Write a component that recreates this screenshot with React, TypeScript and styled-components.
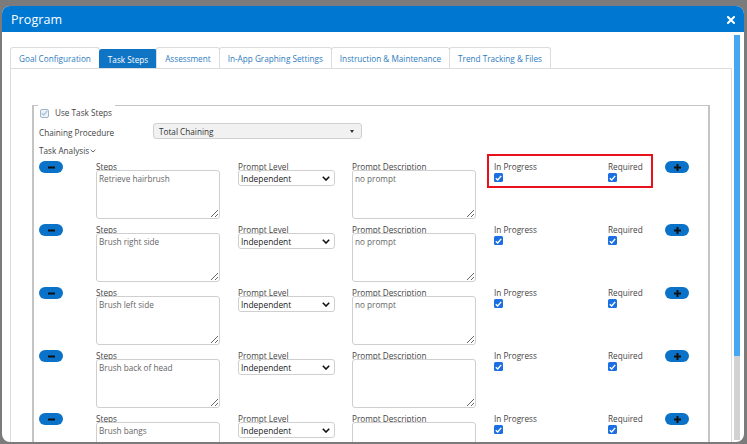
import React from 'react'
import styled, { createGlobalStyle } from 'styled-components'

const GlobalStyle = createGlobalStyle`
	html, body {
		margin: 0;
		padding: 0;
		background: #7b7b7b;
		font-family: "Open Sans", "Noto Sans", sans-serif;
		overflow: hidden;
	}
	* { box-sizing: border-box; }
`

const Page = styled.div`
	width: 747px;
	height: 444px;
	padding: 6px 3px 2px 2px;
`

const Modal = styled.div`
	width: 742px;
	height: 436px;
	background: #fff;
	border-radius: 8px;
	overflow: hidden;
	display: flex;
	flex-direction: column;
	position: relative;
`

const Header = styled.div`
	height: 26px;
	background: #0078d2;
	color: #fff;
	display: flex;
	align-items: center;
	justify-content: space-between;
	padding: 1px 9px 0 9px;
	flex-shrink: 0;
`

const Title = styled.div`
	font-size: 12.5px;
	letter-spacing: 0.1px;
`

const Close = styled.div`
	width: 8px;
	height: 8px;
	display: flex;
	svg { display: block; }
`

const Body = styled.div`
	flex: 1;
	display: flex;
	min-height: 0;
`

const Content = styled.div`
	flex: 1;
	padding: 15px 0 0 8px;
	overflow: hidden;
`

const Scrollbar = styled.div`
	width: 6px;
	margin: 3px 4px 2px 2px;
	background: #d2d2d2;
	display: flex;
	flex-direction: column;
`

const Thumb = styled.div`
	height: 321px;
	background: #45a7f2;
`

const Tabs = styled.div`
	display: flex;
	align-items: flex-end;
	height: 21px;
`

const Tab = styled.div<{ $active?: boolean }>`
	height: ${p => (p.$active ? '19px' : '21px')};
	padding: 0 8px;
	display: flex;
	align-items: center;
	font-size: 8.2px;
	color: ${p => (p.$active ? '#fff' : '#2d7cc0')};
	background: ${p => (p.$active ? '#0f74c4' : '#fff')};
	border: 1px solid ${p => (p.$active ? '#0f74c4' : '#dcdcdc')};
	border-bottom: none;
	border-radius: 3px 3px 0 0;
	margin-right: -1px;
	white-space: nowrap;
`

const Panel = styled.div`
	border: 1px solid #dcdcdc;
	border-bottom: none;
	padding: 22px 21px 0 21px;
	height: 500px;
`

const Fieldset = styled.fieldset`
	margin: 0;
	border: 1px solid #c4c4c4;
	border-width: 1px 2px 0 2px;
	padding: 4px 0 0 5px;
	min-width: 0;
`

const Legend = styled.legend`
	padding: 16px 3px 0 2px;
	margin-left: -1px;
	font-size: 8.2px;
	line-height: 12px;
	color: #444;
	display: flex;
	align-items: center;
	gap: 6px;
`

const GhostBox = styled.span`
	width: 9px;
	height: 9px;
	border: 1px solid #9fb4c8;
	border-radius: 2px;
	background: #eef3f8;
	display: inline-flex;
	align-items: center;
	justify-content: center;
`

const ProcRow = styled.div`
	display: flex;
	align-items: center;
	height: 16px;
`

const ProcLabel = styled.div`
	width: 114px;
	font-size: 8.2px;
	color: #444;
	padding-top: 3px;
`

const ProcSelect = styled.div`
	width: 209px;
	height: 16px;
	background: #f1f1f1;
	border: 1px solid #d0d0d0;
	border-radius: 3px;
	display: flex;
	align-items: center;
	justify-content: space-between;
	padding: 0 7px 0 5px;
	font-size: 8.2px;
	color: #333;
`

const Caret = styled.span`
	width: 0;
	height: 0;
	border-left: 2px solid transparent;
	border-right: 2px solid transparent;
	border-top: 3px solid #333;
	margin-top: 1px;
`

const SectionLabel = styled.div`
	font-size: 8.2px;
	color: #444;
	height: 10px;
	line-height: 10px;
	margin-top: 7px;
	display: flex;
	align-items: center;
`

const Rows = styled.div`
	display: flex;
	flex-direction: column;
	gap: 5px;
	margin-top: 5px;
`

const Row = styled.div`
	display: grid;
	grid-template-columns: 57px 142px 114px 142px 114px 57px 24px;
	position: relative;
`

const Pill = styled.div`
	width: 24px;
	height: 12px;
	border-radius: 6px;
	background: #0a72c8;
	display: flex;
	align-items: center;
	justify-content: center;
	svg { display: block; }
`

const Field = styled.div`
	display: flex;
	flex-direction: column;
	align-items: flex-start;
`

const Label = styled.div`
	font-size: 8.2px;
	color: #444;
	line-height: 9px;
	height: 9px;
	margin-top: 1px;
	white-space: nowrap;
`

const Area = styled.textarea`
	width: 124px;
	height: 49px;
	margin: -1px 0 0 0;
	border: 1px solid #cfcfcf;
	border-radius: 3px;
	padding: 2px 2px;
	font-family: "Open Sans", "Noto Sans", sans-serif;
	font-size: 8.2px;
	color: #666;
	background: #fff;
	outline: none;
	resize: vertical;
`

const Select = styled.div`
	width: 97px;
	height: 16px;
	margin-top: -1px;
	border: 1px solid #cfcfcf;
	border-radius: 3px;
	display: flex;
	align-items: center;
	justify-content: space-between;
	padding: 1px 4px 0 2px;
	font-size: 8.4px;
	color: #222;
`

const Check = styled.span`
	width: 9px;
	height: 9px;
	border-radius: 1.5px;
	background: #1b6fe0;
	display: inline-flex;
	align-items: center;
	justify-content: center;
	margin-top: 2px;
`

const Highlight = styled.div`
	position: absolute;
	left: 448px;
	top: -7px;
	width: 166px;
	height: 34px;
	border: 2px solid #e8101a;
	pointer-events: none;
`

const MinusIcon = () => (
	<svg width="7" height="3" viewBox="0 0 7 3"><rect x="0" y="0.5" width="7" height="2" fill="#111" /></svg>
)

const PlusIcon = () => (
	<svg width="7" height="7" viewBox="0 0 7 7">
		<rect x="0" y="2.5" width="7" height="2" fill="#111" />
		<rect x="2.5" y="0" width="2" height="7" fill="#111" />
	</svg>
)

const Tick = ({ color = '#fff' }: { color?: string }) => (
	<svg width="7" height="6" viewBox="0 0 7 6">
		<path d="M0.8 3.2 L2.7 5 L6.2 0.9" fill="none" stroke={color} strokeWidth="1.4" />
	</svg>
)

const Chevron = () => (
	<svg width="8" height="5" viewBox="0 0 8 5">
		<path d="M0.8 0.8 L4 4 L7.2 0.8" fill="none" stroke="#111" strokeWidth="1.6" />
	</svg>
)

const tabs = [
	'Goal Configuration',
	'Task Steps',
	'Assessment',
	'In-App Graphing Settings',
	'Instruction & Maintenance',
	'Trend Tracking & Files',
]

const steps = [
	{ step: 'Retrieve hairbrush', prompt: 'no prompt' },
	{ step: 'Brush right side', prompt: 'no prompt' },
	{ step: 'Brush left side', prompt: 'no prompt' },
	{ step: 'Brush back of head', prompt: '' },
	{ step: 'Brush bangs', prompt: '' },
]

export default function App() {
	return (
		<Page>
			<GlobalStyle />
			<Modal>
				<Header>
					<Title>Program</Title>
					<Close>
						<svg width="8" height="8" viewBox="0 0 8 8">
							<path d="M1 1 L7 7 M7 1 L1 7" stroke="#fff" strokeWidth="2" strokeLinecap="square" />
						</svg>
					</Close>
				</Header>
				<Body>
					<Content>
						<Tabs>
							{tabs.map(t => (
								<Tab key={t} $active={t === 'Task Steps'}>{t}</Tab>
							))}
						</Tabs>
						<Panel>
							<Fieldset>
								<Legend>
									<GhostBox><Tick color="#a9c3dc" /></GhostBox>
									Use Task Steps
								</Legend>
								<ProcRow>
									<ProcLabel>Chaining Procedure</ProcLabel>
									<ProcSelect>
										Total Chaining
										<Caret />
									</ProcSelect>
								</ProcRow>
								<SectionLabel>
									Task Analysis
									<svg width="6" height="4" viewBox="0 0 6 4" style={{ marginLeft: 1 }}>
										<path d="M0.6 0.8 L3 3 L5.4 0.8" fill="none" stroke="#555" strokeWidth="0.9" />
									</svg>
								</SectionLabel>
								<Rows>
									{steps.map((s, i) => (
										<Row key={i}>
											<div><Pill><MinusIcon /></Pill></div>
											<Field>
												<Label>Steps</Label>
												<Area readOnly defaultValue={s.step} />
											</Field>
											<Field>
												<Label>Prompt Level</Label>
												<Select>
													Independent
													<Chevron />
												</Select>
											</Field>
											<Field>
												<Label>Prompt Description</Label>
												<Area readOnly defaultValue={s.prompt} />
											</Field>
											<Field>
												<Label>In Progress</Label>
												<Check><Tick /></Check>
											</Field>
											<Field>
												<Label>Required</Label>
												<Check><Tick /></Check>
											</Field>
											<div><Pill><PlusIcon /></Pill></div>
											{i === 0 && <Highlight />}
										</Row>
									))}
								</Rows>
							</Fieldset>
						</Panel>
					</Content>
					<Scrollbar>
						<Thumb />
					</Scrollbar>
				</Body>
			</Modal>
		</Page>
	)
}
